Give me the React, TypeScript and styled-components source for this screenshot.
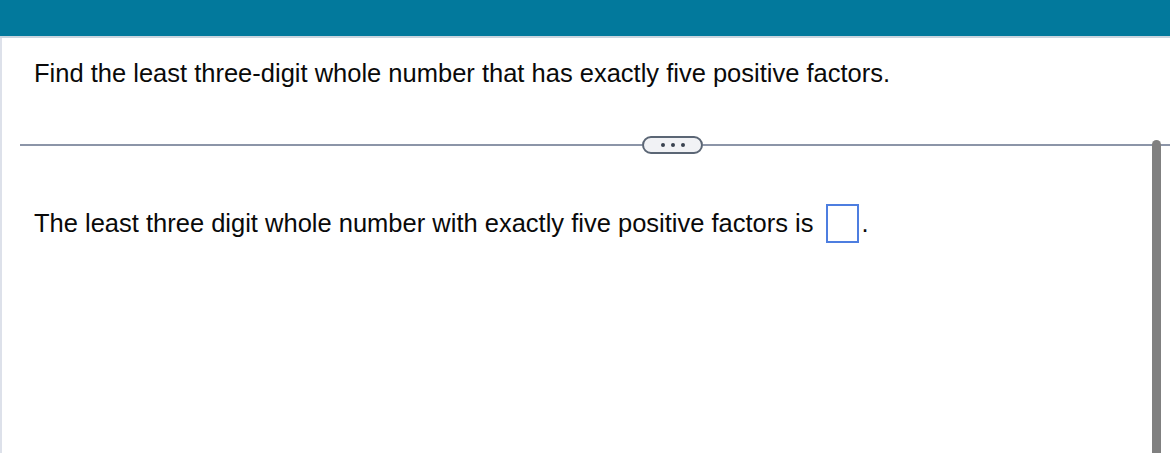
import React from 'react'
import styled, { createGlobalStyle } from 'styled-components'

const GlobalStyle = createGlobalStyle`
  html, body {
    margin: 0;
    padding: 0;
    background: #ffffff;
    overflow: hidden;
  }
  body {
    font-family: 'Liberation Sans', Arial, sans-serif;
    color: #0a0a0a;
  }
`

const Page = styled.div`
  width: 1170px;
  height: 453px;
  display: flex;
  flex-direction: column;
  overflow: hidden;
`

const TopBar = styled.div`
  height: 36px;
  background: #02799c;
  border-bottom: 2px solid #c9d5df;
  flex-shrink: 0;
`

const Body = styled.div`
  flex: 1;
  display: flex;
  border-left: 2px solid #dde1ea;
  position: relative;
`

const Main = styled.div`
  flex: 1;
  display: flex;
  flex-direction: column;
`

const Question = styled.p`
  margin: 0;
  padding: 20px 0 0 32px;
  font-size: 25.5px;
  line-height: 30px;
`

const DividerRow = styled.div`
  margin-top: 48px;
  margin-left: 18px;
  display: flex;
  align-items: center;
  height: 18px;
`

const Line = styled.div<{ $width?: number }>`
  flex: ${(p) => (p.$width ? `0 0 ${p.$width}px` : '1')};
  height: 2px;
  background: #8c95a8;
`

const MoreButton = styled.button`
  width: 61px;
  height: 18px;
  padding: 0;
  border: 2px solid #5b6675;
  border-radius: 9px;
  background: #f1f2f5;
  display: flex;
  align-items: center;
  justify-content: center;
  gap: 6px;
  box-sizing: border-box;
`

const Dot = styled.span`
  width: 4px;
  height: 4px;
  border-radius: 50%;
  background: #3a4350;
`

const Answer = styled.p`
  margin: 0;
  padding: 50px 0 0 32px;
  font-size: 25.5px;
  line-height: 39px;
  display: flex;
  align-items: center;
`

const AnswerBox = styled.span`
  display: inline-block;
  width: 33px;
  height: 39px;
  box-sizing: border-box;
  border: 2px solid #4d7ee0;
  margin: 0 3px 0 12px;
`

const Scroll = styled.div`
  position: absolute;
  top: 102px;
  right: 9px;
  bottom: 0;
  width: 9px;
  background: #808080;
  border-radius: 5px 5px 0 0;
`

export default function App() {
  return (
    <Page>
      <GlobalStyle />
      <TopBar />
      <Body>
        <Main>
          <Question>
            Find the least three-digit whole number that has exactly five positive factors.
          </Question>
          <DividerRow>
            <Line $width={622} />
            <MoreButton aria-label="more">
              <Dot />
              <Dot />
              <Dot />
            </MoreButton>
            <Line />
          </DividerRow>
          <Answer>
            The least three digit whole number with exactly five positive factors is
            <AnswerBox />.
          </Answer>
        </Main>
        <Scroll />
      </Body>
    </Page>
  )
}
